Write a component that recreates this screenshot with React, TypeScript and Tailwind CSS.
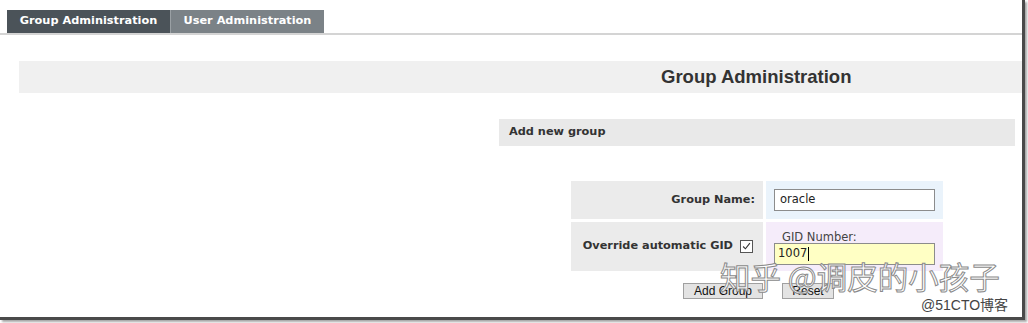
export default function App() {
  const verdana = { fontFamily: '"DejaVu Sans", Verdana, sans-serif' };
  return (
    <div className="relative h-[323px] w-[1028px] overflow-hidden bg-white" style={verdana}>
      {/* framed capture */}
      <div className="h-[320px] w-[1025px] border-r-[3px] border-b-[3px] border-[#4a4a4a] shadow-[2px_2px_2px_rgba(0,0,0,0.35)]">
        {/* tabs */}
        <div className="flex pl-[7px] pt-[10px] border-b-2 border-[#d4d4d4] w-[1022px]">
          <div className="flex h-[23px] w-[163px] items-center justify-center bg-[#4b5359] text-[11.3px] font-bold text-white">
            Group Administration
          </div>
          <div className="flex h-[23px] w-[154px] items-center justify-center border-l border-[#9aa0a4] bg-[#7b8287] text-[11.3px] font-bold text-white">
            User Administration
          </div>
        </div>

        {/* page header */}
        <div className="ml-[19px] mt-[26px] flex h-[32px] w-[1003px] items-center bg-[#f0f0f0] pl-[642px]">
          <span
            className="text-[18.5px] font-bold text-[#333]"
            style={{ fontFamily: '"Liberation Sans Narrow", "Liberation Sans", Arial, sans-serif' }}
          >
            Group Administration
          </span>
        </div>

        {/* section */}
        <div className="ml-[499px] mt-[26px] flex h-[27px] w-[516px] items-center bg-[#e9e9e9] pl-[10px] text-[11.3px] font-bold text-[#333]">
          Add new group
        </div>

        {/* form */}
        <div className="ml-[571px] mt-[35px] w-[372px]">
          <div className="flex h-[38px] gap-[3px]">
            <div className="flex w-[192px] items-center justify-end bg-[#ebebeb] pr-[8px] text-[11.3px] font-bold text-[#333]">
              Group Name:
            </div>
            <div className="flex flex-1 items-center bg-[#eaf3fb] pl-[8px]">
              <div className="flex h-[22px] w-[161px] items-center border border-[#8c8c8c] bg-white px-[5px] text-[11.5px] text-[#222]">
                oracle
              </div>
            </div>
          </div>
          <div className="mt-[3px] flex h-[49px] gap-[3px]">
            <div className="flex w-[192px] items-center justify-end gap-[7px] bg-[#ebebeb] pr-[10px] text-[11.3px] font-bold text-[#333]">
              Override automatic GID
              <span className="relative flex h-[13px] w-[13px] items-center justify-center border border-[#555] bg-white">
                <svg viewBox="0 0 13 13" className="h-[11px] w-[11px]">
                  <path d="M2.5 6.5 L5.2 9.2 L10.5 2.5" fill="none" stroke="#333" strokeWidth="1.3" />
                </svg>
              </span>
            </div>
            <div className="flex flex-1 flex-col bg-[#f5ecfa] pl-[8px] pt-[8px]">
              <div className="pl-[8px] text-[11.5px] leading-[14px] text-[#444]">GID Number:</div>
              <div className="mt-[-1px] flex h-[22px] w-[161px] items-center border border-[#8c8c8c] bg-[#ffffc4] px-[3px] text-[11.5px] text-[#222]">
                1007<span className="ml-[1px] h-[14px] w-[1px] bg-black" />
              </div>
            </div>
          </div>
        </div>

        {/* buttons */}
        <div className="ml-[683px] mt-[12px] flex gap-[19px]">
          <div className="flex h-[16px] w-[80px] items-center justify-center border border-[#a0a0a0] bg-[#e3e3e3] text-[12px] text-[#111]" style={{ fontFamily: '"Liberation Sans", Arial, sans-serif' }}>
            Add Group
          </div>
          <div className="flex h-[16px] w-[52px] items-center justify-center border border-[#a0a0a0] bg-[#e3e3e3] text-[12px] text-[#111]" style={{ fontFamily: '"Liberation Sans", Arial, sans-serif' }}>
            Reset
          </div>
        </div>
      </div>

      {/* watermarks */}
      <div
        className="absolute left-[720px] top-[257px] text-[30.5px] leading-[38px] text-white/85 [-webkit-text-stroke:1px_#8a8a8a]"
        style={{ fontFamily: '"Noto Sans CJK SC", sans-serif' }}
      >
        知乎 @调皮的小孩子
      </div>
      <div
        className="absolute left-[921px] top-[296px] text-[14px] leading-[18px] text-[#444]"
        style={{ fontFamily: '"Liberation Sans", "Noto Sans CJK SC", sans-serif' }}
      >
        @51CTO博客
      </div>
    </div>
  );
}
